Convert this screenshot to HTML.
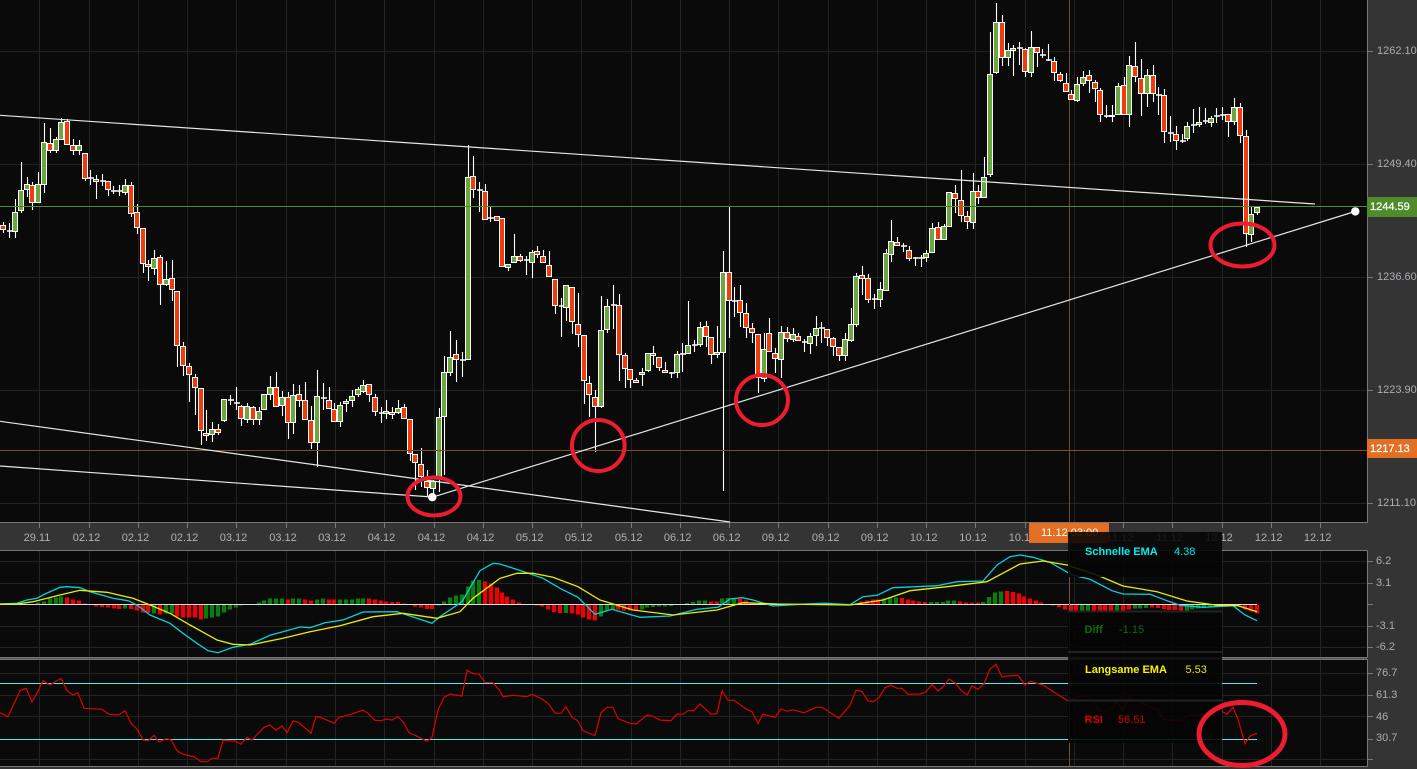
<!DOCTYPE html>
<html><head><meta charset="utf-8"><title>Chart</title>
<style>
html,body{margin:0;padding:0;background:#333;width:1417px;height:769px;overflow:hidden}
svg{display:block}
text{font-family:"Liberation Sans",Arial,sans-serif;font-size:11px}
</style></head><body>
<svg width="1417" height="769" viewBox="0 0 1417 769" xmlns="http://www.w3.org/2000/svg">
<rect width="1417" height="769" fill="#343434"/>
<rect x="0" y="0" width="1367" height="522" fill="#0a0a0a"/>
<rect x="0" y="551" width="1367" height="106" fill="#0a0a0a"/>
<rect x="0" y="660" width="1367" height="106" fill="#0a0a0a"/>
<!-- grid -->
<path fill="none" stroke="#222" stroke-width="1" d="M39.5 0V522M89.5 0V522M138.5 0V522M187.5 0V522M236.5 0V522M286.5 0V522M335.5 0V522M384.5 0V522M434.5 0V522M483.5 0V522M532.5 0V522M581.5 0V522M631.5 0V522M680.5 0V522M729.5 0V522M778.5 0V522M828.5 0V522M877.5 0V522M926.5 0V522M975.5 0V522M1025.5 0V522M1074.5 0V522M1123.5 0V522M1172.5 0V522M1222.5 0V522M1271.5 0V522M1320.5 0V522M0 51.5H1367M0 164.5H1367M0 277.5H1367M0 390.5H1367M0 503.5H1367
M39.5 551V657M89.5 551V657M138.5 551V657M187.5 551V657M236.5 551V657M286.5 551V657M335.5 551V657M384.5 551V657M434.5 551V657M483.5 551V657M532.5 551V657M581.5 551V657M631.5 551V657M680.5 551V657M729.5 551V657M778.5 551V657M828.5 551V657M877.5 551V657M926.5 551V657M975.5 551V657M1025.5 551V657M1074.5 551V657M1123.5 551V657M1172.5 551V657M1222.5 551V657M1271.5 551V657M1320.5 551V657M0 561.5H1367M0 583.5H1367M0 626.5H1367M0 647.5H1367
M39.5 660V766M89.5 660V766M138.5 660V766M187.5 660V766M236.5 660V766M286.5 660V766M335.5 660V766M384.5 660V766M434.5 660V766M483.5 660V766M532.5 660V766M581.5 660V766M631.5 660V766M680.5 660V766M729.5 660V766M778.5 660V766M828.5 660V766M877.5 660V766M926.5 660V766M975.5 660V766M1025.5 660V766M1074.5 660V766M1123.5 660V766M1172.5 660V766M1222.5 660V766M1271.5 660V766M1320.5 660V766M0 673.5H1367M0 695.5H1367M0 716.5H1367M0 759.5H1367"/>
<!-- crosshair -->
<path d="M1069.5 0V523" stroke="#6b4a30" stroke-width="1" fill="none"/>
<!-- axis borders -->
<path fill="none" stroke="#777" d="M0 522.5H1367.5M1367.5 0V522.5M0 550.5H1367.5M1367.5 550.5V657.5M0 657.5H1367.5M0 659.5H1367.5M1367.5 659.5V766.5M0 766.5H1367.5"/>
<rect x="0" y="658" width="1367" height="1" fill="#555"/>
<!-- ticks -->
<path fill="none" stroke="#777" d="M39.5 523V528M89.5 523V528M138.5 523V528M187.5 523V528M236.5 523V528M286.5 523V528M335.5 523V528M384.5 523V528M434.5 523V528M483.5 523V528M532.5 523V528M581.5 523V528M631.5 523V528M680.5 523V528M729.5 523V528M778.5 523V528M828.5 523V528M877.5 523V528M926.5 523V528M975.5 523V528M1025.5 523V528M1074.5 523V528M1123.5 523V528M1172.5 523V528M1222.5 523V528M1271.5 523V528M1320.5 523V528
M1368 51.5H1373M1368 164.5H1373M1368 277.5H1373M1368 390.5H1373M1368 503.5H1373M1368 561.5H1373M1368 583.5H1373M1368 604.5H1373M1368 626.5H1373M1368 647.5H1373M1368 673.5H1373M1368 695.5H1373M1368 716.5H1373M1368 739.5H1373M1368 759.5H1373"/>
<!-- candles -->
<g transform="translate(.5,0)" fill="none" stroke="#fff" stroke-width="1.1">
<path d="M3 222V233M9 223V238M15 199V238M21 162V213M27 177V197M32 182V210M38 172V202M44 123V193M50 128V153M56 137V153M61 118V139M67 119V145M73 139V155M79 140V155M85 153V181M90 170V185M96 175V199M102 174V186M108 181V196M113 186V194M119 185V196M125 179V195M131 182V217M137 204V234M143 228V273M148 260V281M154 250V275M160 255V305M166 261V286M172 260V301M177 291V367M183 342V376M189 363V402M195 374V415M201 388V445M206 410V441M212 422V442M218 424V435M224 399V422M230 395V405M236 387V410M241 405V426M247 403V423M253 406V425M259 407V425M264 394V409M270 376V400M276 372V406M282 391V416M288 392V439M293 384V434M299 385V407M305 382V419M311 406V449M317 370V467M323 383V410M329 387V408M334 403V421M340 402V427M346 399V412M352 390V407M358 387V397M363 380V393M369 384V402M375 394V416M381 407V423M386 400V419M392 407V419M398 400V414M404 404V418M410 419V461M415 455V490M421 448V487M427 470V497M433 480V495M439 408V492M444 356V475M450 331V376M456 340V382M462 352V377M468 145V360M473 156V198M479 182V212M485 184V219M490 207V222M496 216V220M502 218V267M508 264V271M514 234V262M520 254V262M526 256V275M532 250V278M537 246V258M543 250V262M549 251V276M555 279V314M561 298V337M566 285V321M572 287V334M578 293V347M584 335V404M589 376V417M595 390V452M601 296V408M607 299V333M613 285V329M619 294V381M625 353V388M630 369V388M636 378V382M642 368V386M648 353V372M653 346V365M659 357V371M665 362V373M671 372V378M677 351V378M682 343V372M688 301V353M694 340V352M700 322V347M706 321V347M711 337V364M717 326V358M723 251V491M729 207V338M734 287V317M740 285V327M746 303V338M752 323V343M758 335V393M764 333V382M769 318V351M775 348V373M781 326V378M787 327V342M793 328V342M798 333V341M804 339V352M810 333V354M816 316V346M821 322V343M827 329V346M833 337V356M839 347V361M845 333V361M851 308V342M856 273V327M862 266V295M868 274V303M874 294V309M880 282V307M886 249V290M891 220V262M897 237V246M903 243V252M909 246V261M915 257V266M921 255V267M926 250V262M932 223V252M938 222V239M944 224V239M949 192V226M955 185V213M961 170V222M967 211V229M973 173V229M978 185V204M984 157V197M990 32V177M996 3V74M1002 15V66M1008 43V66M1013 45V76M1019 42V65M1025 48V77M1031 31V77M1037 47V67M1042 49V58M1048 44V61M1054 57V81M1060 72V82M1066 73V92M1071 90V100M1077 77V102M1083 71V86M1089 70V93M1095 80V102M1100 88V122M1106 105V118M1112 105V122M1118 83V115M1124 77V115M1129 56V127M1135 42V82M1141 59V116M1147 69V107M1153 65V102M1158 87V115M1164 89V143M1170 116V142M1176 126V150M1182 134V143M1187 122V141M1193 109V133M1199 107V127M1205 108V124M1211 116V127M1216 108V123M1222 107V120M1228 114V137M1234 98V125M1240 103V143M1246 130V247M1251 207V242M1257 207V215"/>
<path stroke-width="1.6" d="M6.5 231h6M87.5 178h6M99.5 181h6M110.5 191h6M116.5 191h6M227.5 400h6M233.5 403h6M320.5 398h6M378.5 413h6M459.5 360h6M476.5 190h6M487.5 218h6M523.5 260h6M558.5 306h6M610.5 305h6M668.5 373h6M679.5 354h6M691.5 345h6M731.5 301h6M801.5 342h6M818.5 328h6M871.5 299h6M900.5 246h6M912.5 258h6M918.5 258h6M1016.5 48h6M1039.5 55h6M1045.5 60h6M1103.5 116h6M1155.5 95h6M1167.5 133h6M1179.5 141h6M1190.5 125h6M1202.5 121h6M1213.5 116h6M1219.5 115h6"/>
</g>
<g transform="translate(0,.5)" stroke="#fff" stroke-width="1">
<path fill="#6aa83f" d="M12.5 212h5V231h-5zM18.5 190h5V210h-5zM24.5 184h5V189h-5zM35.5 184h5V202h-5zM41.5 142h5V184h-5zM53.5 139h5V150h-5zM58.5 122h5V139h-5zM76.5 145h5V150h-5zM122.5 185h5V192h-5zM151.5 258h5V268h-5zM163.5 279h5V284h-5zM209.5 429h5V434h-5zM221.5 399h5V420h-5zM244.5 406h5V419h-5zM256.5 411h5V419h-5zM261.5 394h5V409h-5zM267.5 387h5V394h-5zM279.5 397h5V405h-5zM290.5 395h5V422h-5zM314.5 396h5V442h-5zM337.5 405h5V421h-5zM343.5 401h5V403h-5zM349.5 396h5V400h-5zM355.5 389h5V394h-5zM360.5 385h5V391h-5zM383.5 411h5V413h-5zM395.5 408h5V412h-5zM430.5 481h5V488h-5zM436.5 417h5V478h-5zM441.5 372h5V416h-5zM447.5 357h5V372h-5zM465.5 177h5V359h-5zM505.5 264h5V267h-5zM511.5 256h5V262h-5zM529.5 252h5V262h-5zM563.5 285h5V307h-5zM598.5 330h5V406h-5zM604.5 306h5V329h-5zM639.5 372h5V374h-5zM645.5 353h5V370h-5zM674.5 354h5V372h-5zM685.5 345h5V353h-5zM697.5 327h5V344h-5zM714.5 352h5V354h-5zM720.5 272h5V352h-5zM761.5 349h5V378h-5zM778.5 332h5V359h-5zM790.5 334h5V339h-5zM807.5 336h5V343h-5zM813.5 328h5V335h-5zM842.5 339h5V355h-5zM848.5 324h5V340h-5zM853.5 276h5V324h-5zM877.5 289h5V299h-5zM883.5 253h5V290h-5zM888.5 241h5V254h-5zM923.5 253h5V257h-5zM929.5 228h5V252h-5zM941.5 226h5V239h-5zM946.5 192h5V226h-5zM970.5 191h5V222h-5zM981.5 177h5V197h-5zM987.5 74h5V174h-5zM993.5 22h5V72h-5zM1005.5 50h5V57h-5zM1010.5 48h5V50h-5zM1028.5 47h5V72h-5zM1074.5 84h5V100h-5zM1080.5 77h5V83h-5zM1109.5 115h5V116h-5zM1115.5 86h5V114h-5zM1126.5 65h5V114h-5zM1144.5 75h5V93h-5zM1184.5 126h5V138h-5zM1196.5 122h5V124h-5zM1208.5 118h5V122h-5zM1231.5 107h5V121h-5zM1248.5 214h5V234h-5zM1254.5 207h5V212h-5z"/>
<path fill="#f03c0c" d="M.5 225h5V229h-5zM29.5 185h5V202h-5zM47.5 143h5V150h-5zM64.5 121h5V144h-5zM70.5 145h5V150h-5zM82.5 153h5V178h-5zM93.5 179h5V181h-5zM105.5 181h5V189h-5zM128.5 185h5V213h-5zM134.5 212h5V227h-5zM140.5 228h5V263h-5zM145.5 264h5V266h-5zM157.5 257h5V284h-5zM169.5 278h5V289h-5zM174.5 291h5V345h-5zM180.5 346h5V365h-5zM186.5 366h5V374h-5zM192.5 377h5V387h-5zM198.5 388h5V430h-5zM203.5 433h5V435h-5zM215.5 429h5V432h-5zM238.5 406h5V418h-5zM250.5 407h5V419h-5zM273.5 387h5V406h-5zM285.5 397h5V422h-5zM296.5 394h5V400h-5zM302.5 400h5V419h-5zM308.5 420h5V442h-5zM326.5 400h5V408h-5zM331.5 409h5V421h-5zM366.5 384h5V394h-5zM372.5 397h5V411h-5zM389.5 412h5V414h-5zM401.5 407h5V418h-5zM407.5 419h5V453h-5zM412.5 454h5V462h-5zM418.5 464h5V476h-5zM424.5 481h5V487h-5zM453.5 354h5V359h-5zM470.5 176h5V189h-5zM482.5 191h5V219h-5zM494.5 216h5V220h-5zM499.5 218h5V266h-5zM517.5 256h5V260h-5zM534.5 251h5V254h-5zM540.5 256h5V262h-5zM546.5 265h5V276h-5zM552.5 279h5V305h-5zM569.5 287h5V321h-5zM575.5 324h5V334h-5zM581.5 335h5V380h-5zM586.5 383h5V394h-5zM592.5 397h5V406h-5zM616.5 305h5V354h-5zM622.5 355h5V368h-5zM627.5 369h5V379h-5zM633.5 380h5V382h-5zM650.5 353h5V355h-5zM656.5 357h5V367h-5zM662.5 370h5V372h-5zM703.5 326h5V336h-5zM708.5 337h5V354h-5zM726.5 272h5V300h-5zM737.5 300h5V312h-5zM743.5 313h5V327h-5zM749.5 328h5V332h-5zM755.5 334h5V377h-5zM766.5 333h5V351h-5zM772.5 353h5V358h-5zM784.5 332h5V338h-5zM795.5 336h5V340h-5zM824.5 329h5V337h-5zM830.5 338h5V346h-5zM836.5 347h5V355h-5zM859.5 275h5V278h-5zM865.5 278h5V299h-5zM894.5 242h5V245h-5zM906.5 250h5V258h-5zM935.5 227h5V239h-5zM952.5 193h5V198h-5zM958.5 200h5V215h-5zM964.5 216h5V221h-5zM975.5 191h5V197h-5zM999.5 22h5V57h-5zM1022.5 49h5V71h-5zM1034.5 47h5V52h-5zM1051.5 61h5V72h-5zM1057.5 74h5V80h-5zM1063.5 83h5V91h-5zM1068.5 94h5V99h-5zM1086.5 75h5V80h-5zM1092.5 82h5V88h-5zM1097.5 90h5V114h-5zM1121.5 85h5V114h-5zM1132.5 66h5V76h-5zM1138.5 78h5V93h-5zM1150.5 75h5V93h-5zM1161.5 95h5V131h-5zM1173.5 134h5V140h-5zM1225.5 114h5V121h-5zM1237.5 107h5V135h-5zM1243.5 136h5V233h-5z"/>
</g>
<!-- horizontal level lines -->
<rect x="0" y="206" width="1367" height="1" fill="#4f8f1f"/>
<rect x="0" y="450" width="1367" height="1" fill="#8a4a1c"/>
<!-- trend lines -->
<g stroke="#e6e6e6" stroke-width="1.2" fill="none">
<path d="M0 115.3L1315 204"/>
<path d="M0 421.3L730 522"/>
<path d="M0 466L432 497"/>
<path d="M432 497.3L1355 211.5"/>
</g>
<circle cx="432.3" cy="497.2" r="4.2" fill="#fff"/>
<circle cx="1355.3" cy="211.4" r="4.2" fill="#fff"/>
<!-- MACD histogram -->
<path fill="none" stroke="#0a7d0a" stroke-width="4.2" d="M38 604.5v-2M44 604.5v-3M50 604.5v-6M56 604.5v-7M61 604.5v-8M125 604.5v4M154 604.5v9M166 604.5v9M172 604.5v9M206 604.5v14M212 604.5v13M218 604.5v12M224 604.5v8M230 604.5v5M236 604.5v3M241 604.5v1M253 604.5v-.5M259 604.5v-2M264 604.5v-4M270 604.5v-6M276 604.5v-6M282 604.5v-6M293 604.5v-6M299 604.5v-6M317 604.5v-5M323 604.5v-6M340 604.5v-5M346 604.5v-5M352 604.5v-5M358 604.5v-6M363 604.5v-6M439 604.5v1M444 604.5v-3M450 604.5v-7M456 604.5v-9M462 604.5v-10M468 604.5v-18M473 604.5v-24M479 604.5v-24.5M566 604.5v8.5M601 604.5v12M607 604.5v6M613 604.5v5M642 604.5v5M647 604.5v3M653 604.5v2.5M659 604.5v2M665 604.5v2M671 604.5v1.5M687 604.5v-1.5M693 604.5v-2.5M699 604.5v-4M705 604.5v-4M722 604.5v-6M728 604.5v-6.5M734 604.5v-6.5M884 604.5v-6M890 604.5v-7M896 604.5v-7M931 604.5v-2.5M937 604.5v-2.5M943 604.5v-2.5M948 604.5v-4M954 604.5v-4M983 604.5v-2.5M989 604.5v-7.5M995 604.5v-12M1001 604.5v-13M1082 604.5v6M1088 604.5v6M1117 604.5v6M1135 604.5v4M1140 604.5v4M1146 604.5v3.5M1187 604.5v6M1192 604.5v5M1198 604.5v4M1204 604.5v3M1210 604.5v3M1216 604.5v2M1222 604.5v2M1227 604.5v1"/>
<path fill="none" stroke="#f00000" stroke-width="4.2" d="M67 604.5v-7M73 604.5v-5M79 604.5v-4M85 604.5v-1M96 604.5v2M102 604.5v2.5M108 604.5v3M114 604.5v4M119 604.5v4.5M131 604.5v4.5M137 604.5v6M143 604.5v8M148 604.5v8.5M160 604.5v10M177 604.5v12M183 604.5v13M189 604.5v13M195 604.5v13M201 604.5v15M288 604.5v-5M305 604.5v-5M311 604.5v-4M329 604.5v-5M334 604.5v-5M369 604.5v-6M375 604.5v-5M381 604.5v-4M386 604.5v-3M392 604.5v-2.5M398 604.5v-2.5M404 604.5v-1M415 604.5v2M421 604.5v3M427 604.5v4.5M432 604.5v4.5M485 604.5v-23M491 604.5v-21M497 604.5v-17M502 604.5v-12M507 604.5v-8M513 604.5v-5M519 604.5v-2M537 604.5v1M542 604.5v2M548 604.5v5M554 604.5v7.5M560 604.5v8.5M572 604.5v9M578 604.5v10M583 604.5v13M589 604.5v15M595 604.5v16M618 604.5v5M624 604.5v6M630 604.5v6M636 604.5v6M711 604.5v-3M717 604.5v-3M740 604.5v-5.5M746 604.5v-4M752 604.5v-1.5M861 604.5v-3M867 604.5v-4M873 604.5v-5M878 604.5v-5M902 604.5v-6.5M908 604.5v-5M913 604.5v-4M919 604.5v-3M925 604.5v-2.5M960 604.5v-3M966 604.5v-2M972 604.5v-2M978 604.5v-2M1007 604.5v-13.5M1013 604.5v-12.5M1019 604.5v-11M1024 604.5v-8M1030 604.5v-6M1036 604.5v-4M1041 604.5v-2M1053 604.5v1M1059 604.5v2.5M1065 604.5v5M1071 604.5v6M1076 604.5v6M1094 604.5v6M1100 604.5v6M1105 604.5v6.5M1111 604.5v7M1123 604.5v6M1129 604.5v5M1152 604.5v3M1158 604.5v3.5M1164 604.5v4.5M1169 604.5v5.5M1175 604.5v5.5M1181 604.5v6M1233 604.5v1M1239 604.5v1M1245 604.5v5M1251 604.5v7M1257 604.5v9"/>
<rect x="0" y="604" width="1257" height="1" fill="#d9dde8"/>
<!-- MACD lines -->
<polyline fill="none" stroke="#00d4e0" stroke-width="1.3" points="0,604 17,603.3 27,600 37,598.3 45,594 60,587.3 67,586.7 80,587.7 90,591.7 113,598.3 128,600.7 137,605 150,615 170,623.3 183,633.3 197,643.3 208,650.7 218,652.7 233,647.3 250,644.3 270,635.3 283,631.7 300,627 310,627.7 325,622.7 343,620 363,612 397,611.7 410,616 432,623.3 440,616.7 462,601.7 480,570.7 493,563.3 500,564 527,572.7 543,578.3 560,588.3 578,597.3 595,614.3 612,609.3 640,617.3 670,616 697,609.3 718,607.3 730,599 742,597.7 753,600 773,606 800,604.3 825,603.3 850,604.7 863,596.7 877,595.3 893,587.7 917,586.7 937,585.7 957,581.7 983,581 997,565 1010,556.7 1020,555 1033,557.3 1050,562.3 1072,575 1090,579.3 1112,590.7 1123,594 1150,594.3 1167,600.7 1180,605.3 1203,607.3 1233,605.7 1245,615 1257,620.7"/>
<polyline fill="none" stroke="#ecec00" stroke-width="1.3" points="0,604 17,604 33,601.7 60,595 80,590.3 107,592.3 133,598.3 150,605 170,613.3 190,625 217,640 233,644.3 250,645 283,638.3 310,631.7 340,625.7 373,616.7 403,613.3 437,618.3 460,611.7 473,598.3 500,578.3 517,573.3 533,573.3 553,577.3 578,586.7 600,600 633,610 673,615 717,610 743,602.7 777,604 850,605 883,600 910,590.7 947,586.7 987,581.7 1020,564 1043,561 1067,565 1097,575 1123,586 1157,591.7 1187,601 1217,605.3 1238,605.7 1257,611.7"/>
<!-- RSI -->
<rect x="0" y="683" width="1257" height="1" fill="#55e8e8"/>
<rect x="0" y="739" width="1257" height="1" fill="#55e8e8"/>
<polyline fill="none" stroke="#e00000" stroke-width="1.2" points="0,712.7 8,716.7 20,690.7 26,688.3 32,701.7 37,693.3 43,680.7 50,685 61,678.3 67,690.7 73,695 78,692.7 84,708.3 102,709.3 109,714.3 119,714.7 125,710.7 131,723.3 137,729 143,740 148,740.7 154,735.3 159,742 166,738.7 171,740 177,750.7 183,754.3 194,756.7 201,761.7 207,761.7 212,758.3 218,758.3 223,740.3 235,741 241,744.3 247,737.3 252,740 264,727.3 270,725 276,730.3 282,726 287,732.7 293,721 299,722.7 311,733.3 316,716.3 323,718.3 334,723.3 339,717.3 350,714.7 363,710 368,713.3 375,720.3 381,720.7 386,719 392,720 398,716.7 403,721.7 409,732.7 415,735.3 427,741.3 432,737.3 438,710 444,697.3 450,694 462,696 467,670.3 473,673.7 479,674 485,682.3 493,682.7 500,691 503,696.7 513,695.3 527,696.7 532,694.3 542,699 549,704.3 555,713.3 561,713.3 566,706.7 572,717.3 578,721 583,730.7 595,735.7 601,712.7 607,707.3 613,707.3 618,718.7 630,723.3 636,724 647,715.3 653,716.3 660,720 671,720.7 677,714 683,714.3 688,710.7 694,710.7 700,704 711,714.3 717,713.7 722,690.7 728,700.3 734,700.3 746,709 752,711.7 758,723.3 763,714.3 775,717.3 781,709 787,711.3 793,709.7 804,712.7 816,707.3 822,707.3 839,718.3 850,705.3 856,690.3 862,691.3 868,701 873,701.7 879,697.7 885,687.7 891,685.3 897,688.3 902,688.3 908,694.3 920,694 926,692 932,684.3 938,691 943,687 949,679 955,682.7 961,690.3 967,695 972,686 978,689.3 984,683.7 990,669 996,664.3 1002,677 1007,676 1018,675.3 1025,685 1030,681.3 1043,685 1055,692.7 1068,701 1082,695.7 1090,697.3 1100,710.7 1110,710.7 1117,701.7 1123,710.7 1129,697.7 1140,701.7 1152,708.3 1157,708.3 1163,719.3 1182,721 1187,715.7 1203,715 1217,708.3 1227,714.3 1233,707.3 1238,719.3 1245,743.7 1250,736 1257,733.3"/>
<!-- time labels -->
<g fill="#aeb0b4" text-anchor="middle">
<text x="37" y="541">29.11</text><text x="86.5" y="541">02.12</text><text x="135.5" y="541">02.12</text><text x="184.5" y="541">02.12</text><text x="233.5" y="541">03.12</text><text x="283" y="541">03.12</text><text x="332" y="541">03.12</text><text x="381.5" y="541">04.12</text><text x="431.5" y="541">04.12</text><text x="480.5" y="541">04.12</text><text x="529.7" y="541">05.12</text><text x="578.7" y="541">05.12</text><text x="628.7" y="541">05.12</text><text x="677.7" y="541">06.12</text><text x="726.7" y="541">06.12</text><text x="775.7" y="541">09.12</text><text x="825.7" y="541">09.12</text><text x="874.7" y="541">09.12</text><text x="923.7" y="541">10.12</text><text x="973" y="541">10.12</text><text x="1022.5" y="541">10.12</text><text x="1071" y="541">11.12</text><text x="1120" y="541">11.12</text><text x="1169.7" y="541">11.12</text><text x="1219" y="541">12.12</text><text x="1268.7" y="541">12.12</text><text x="1317.7" y="541">12.12</text>
</g>
<!-- right axis labels -->
<g fill="#a9adb3">
<text x="1377" y="54">1262.10</text><text x="1377" y="167">1249.40</text><text x="1377" y="280">1236.60</text><text x="1377" y="393">1223.90</text><text x="1377" y="506">1211.10</text>
<text x="1376" y="564">6.2</text><text x="1376" y="586">3.1</text><text x="1376" y="629">-3.1</text><text x="1376" y="650">-6.2</text>
<text x="1376" y="676">76.7</text><text x="1376" y="698">61.3</text><text x="1376" y="720">46</text><text x="1376" y="741">30.7</text>
</g>
<!-- price tags -->
<rect x="1367" y="197" width="50" height="20" fill="#4f8a2b"/>
<text x="1370" y="210" fill="#fff" stroke="#fff" stroke-width=".25">1244.59</text>
<rect x="1367" y="439" width="50" height="19" fill="#e26f22"/>
<text x="1370" y="452" fill="#fff" stroke="#fff" stroke-width=".25">1217.13</text>
<rect x="1029" y="523" width="80" height="20" fill="#e26f22"/>
<text x="1041" y="536" fill="#fff">11.12 03:00</text>
<path d="M1069.5 543V766" stroke="#7a5030" fill="none"/>
<!-- tooltip overlay -->
<g fill="#050505" fill-opacity=".88">
<rect x="1068" y="532" width="154" height="45"/>
<rect x="1068" y="611" width="154" height="41"/>
<rect x="1068" y="653" width="154" height="47"/>
<rect x="1068" y="701" width="154" height="42"/>
</g>
<path d="M1068 611.5H1222M1068 652H1222M1068 700.5H1222" stroke="#222" stroke-width="2" fill="none"/>
<g font-weight="bold">
<text x="1085" y="555" font-weight="bold" fill="#00f0f0" stroke="none">Schnelle EMA</text>
<text x="1084.5" y="633" font-weight="bold" fill="#0a6e0a">Diff</text>
<text x="1085" y="673" font-weight="bold" fill="#f5f500">Langsame EMA</text>
<text x="1084.5" y="723" font-weight="bold" fill="#d80000">RSI</text>
</g>
<text x="1174" y="555" fill="#00e8e8">4.38</text>
<text x="1119" y="633" fill="#0a6e0a">-1.15</text>
<text x="1185.5" y="673" fill="#e8e800">5.53</text>
<text x="1118" y="723" fill="#d80000">56.51</text>
<!-- red circles -->
<g fill="none" stroke="#ed1c2e">
<ellipse cx="434" cy="496.5" rx="26.5" ry="19" stroke-width="4"/>
<ellipse cx="598.3" cy="445.5" rx="26.3" ry="25.5" stroke-width="4"/>
<ellipse cx="762" cy="400" rx="26" ry="25" stroke-width="4"/>
<ellipse cx="1242.5" cy="245" rx="32" ry="21.5" stroke-width="4"/>
<ellipse cx="1242" cy="734" rx="43" ry="31.5" stroke-width="5"/>
</g>
</svg>
</body></html>
